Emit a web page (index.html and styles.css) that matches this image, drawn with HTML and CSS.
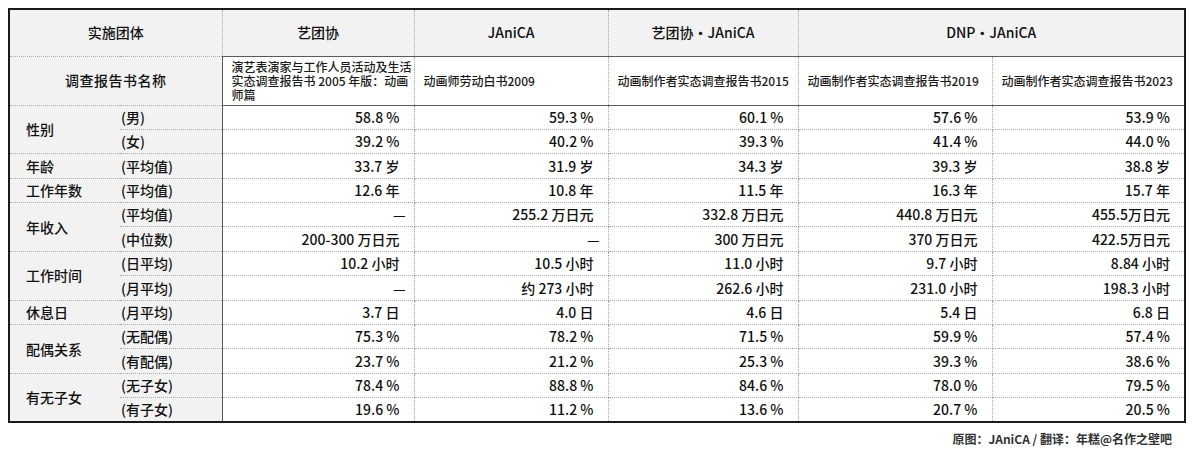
FILE: index.html
```html
<!DOCTYPE html>
<html lang="zh-CN">
<head>
<meta charset="utf-8">
<title>动画制作者实态调查</title>
<link rel="stylesheet" href="styles.css">
</head>
<body>
<table class="survey">
  <colgroup>
    <col class="c-label">
    <col class="c-sub">
    <col class="c-d1">
    <col class="c-d2">
    <col class="c-d3">
    <col class="c-d4">
    <col class="c-d5">
  </colgroup>
  <tr class="h1">
    <th colspan="2" class="hcell">实施团体</th>
    <th class="hcell">艺团协</th>
    <th class="hcell">JAniCA</th>
    <th class="hcell">艺团协・JAniCA</th>
    <th colspan="2" class="hcell">DNP・JAniCA</th>
  </tr>
  <tr class="h2">
    <th colspan="2" class="hcell name-label">调查报告书名称</th>
    <td class="rep first top">演艺表演家与工作人员活动及生活实态调查报告书 2005 年版：动画师篇</td>
    <td class="rep top">动画师劳动白书2009</td>
    <td class="rep top">动画制作者实态调查报告书2015</td>
    <td class="rep top">动画制作者实态调查报告书2019</td>
    <td class="rep top">动画制作者实态调查报告书2023</td>
  </tr>
  <tr class="r">
    <th rowspan="2" class="lab">性别</th>
    <th class="sub">(男)</th>
    <td class="v first top">58.8 %</td><td class="v top">59.3 %</td><td class="v top">60.1 %</td><td class="v top">57.6 %</td><td class="v top">53.9 %</td>
  </tr>
  <tr class="r">
    <th class="sub">(女)</th>
    <td class="v first">39.2 %</td><td class="v">40.2 %</td><td class="v">39.3 %</td><td class="v">41.4 %</td><td class="v">44.0 %</td>
  </tr>
  <tr class="r">
    <th class="lab">年龄</th>
    <th class="sub">(平均值)</th>
    <td class="v first">33.7 岁</td><td class="v">31.9 岁</td><td class="v">34.3 岁</td><td class="v">39.3 岁</td><td class="v">38.8 岁</td>
  </tr>
  <tr class="r">
    <th class="lab">工作年数</th>
    <th class="sub">(平均值)</th>
    <td class="v first">12.6 年</td><td class="v">10.8 年</td><td class="v">11.5 年</td><td class="v">16.3 年</td><td class="v">15.7 年</td>
  </tr>
  <tr class="r">
    <th rowspan="2" class="lab">年收入</th>
    <th class="sub">(平均值)</th>
    <td class="v first dash">—</td><td class="v">255.2 万日元</td><td class="v">332.8 万日元</td><td class="v">440.8 万日元</td><td class="v">455.5万日元</td>
  </tr>
  <tr class="r">
    <th class="sub">(中位数)</th>
    <td class="v first">200-300 万日元</td><td class="v dash">—</td><td class="v">300 万日元</td><td class="v">370 万日元</td><td class="v">422.5万日元</td>
  </tr>
  <tr class="r">
    <th rowspan="2" class="lab">工作时间</th>
    <th class="sub">(日平均)</th>
    <td class="v first">10.2 小时</td><td class="v">10.5 小时</td><td class="v">11.0 小时</td><td class="v">9.7 小时</td><td class="v">8.84 小时</td>
  </tr>
  <tr class="r">
    <th class="sub">(月平均)</th>
    <td class="v first dash">—</td><td class="v">约 273 小时</td><td class="v">262.6 小时</td><td class="v">231.0 小时</td><td class="v">198.3 小时</td>
  </tr>
  <tr class="r">
    <th class="lab">休息日</th>
    <th class="sub">(月平均)</th>
    <td class="v first">3.7 日</td><td class="v">4.0 日</td><td class="v">4.6 日</td><td class="v">5.4 日</td><td class="v">6.8 日</td>
  </tr>
  <tr class="r">
    <th rowspan="2" class="lab">配偶关系</th>
    <th class="sub">(无配偶)</th>
    <td class="v first">75.3 %</td><td class="v">78.2 %</td><td class="v">71.5 %</td><td class="v">59.9 %</td><td class="v">57.4 %</td>
  </tr>
  <tr class="r">
    <th class="sub">(有配偶)</th>
    <td class="v first">23.7 %</td><td class="v">21.2 %</td><td class="v">25.3 %</td><td class="v">39.3 %</td><td class="v">38.6 %</td>
  </tr>
  <tr class="r">
    <th rowspan="2" class="lab">有无子女</th>
    <th class="sub">(无子女)</th>
    <td class="v first">78.4 %</td><td class="v">88.8 %</td><td class="v">84.6 %</td><td class="v">78.0 %</td><td class="v">79.5 %</td>
  </tr>
  <tr class="r">
    <th class="sub">(有子女)</th>
    <td class="v first">19.6 %</td><td class="v">11.2 %</td><td class="v">13.6 %</td><td class="v">20.7 %</td><td class="v">20.5 %</td>
  </tr>
</table>
<div class="credit">原图：JAniCA / 翻译：年糕@名作之壁吧</div>
</body>
</html>
```

FILE: styles.css
```css
html, body {
  margin: 0;
  padding: 0;
  background: #ffffff;
}

body {
  padding: 8px;
  font-family: "Noto Sans CJK SC", "Noto Sans", sans-serif;
  color: #111111;
}

.survey {
  width: 1176px;
  table-layout: fixed;
  border-collapse: collapse;
  border: 2px solid #1a1a1a;
  font-size: 14px;
}

.c-label { width: 111px; }
.c-sub { width: 102px; }
.c-d1 { width: 192px; }
.c-d2 { width: 194px; }
.c-d3 { width: 190px; }
.c-d4 { width: 194px; }
.c-d5 { width: 193px; }

.survey th,
.survey td {
  border: 1px dotted #a8a8a8;
  padding: 0;
  font-weight: 500;
  line-height: 1.2;
}

.survey th {
  background: #f2f2f2;
}

.h1 { height: 47px; }
.h2 { height: 49px; }
.r { height: 24.4px; }

.survey .hcell {
  text-align: center;
  vertical-align: middle;
}

.survey .name-label {
  letter-spacing: 0.5px;
}

.survey .rep {
  background: #ffffff;
  font-family: "Noto Sans CJK SC", sans-serif;
  font-size: 12px;
  line-height: 14px;
  text-align: left;
  vertical-align: middle;
  padding: 0 2px 0 9px;
  color: #1a1a1a;
}

.survey .top {
  border-top: 1px solid #5a5a5a;
}

.survey .first {
  border-left: 1px solid #5a5a5a;
}

.survey .lab {
  text-align: left;
  padding-left: 16px;
  border-right-style: none;
}

.survey .sub {
  text-align: left;
  padding-left: 1px;
  border-left-style: none;
}

.survey .v {
  text-align: right;
  padding-right: 14px;
  background: #ffffff;
  white-space: nowrap;
}

.survey .v.dash {
  padding-right: 8px;
}

.credit {
  width: 1176px;
  text-align: right;
  padding-right: 12px;
  box-sizing: border-box;
  margin-top: 7px;
  font-size: 12px;
  font-weight: 700;
  color: #333333;
}
```
